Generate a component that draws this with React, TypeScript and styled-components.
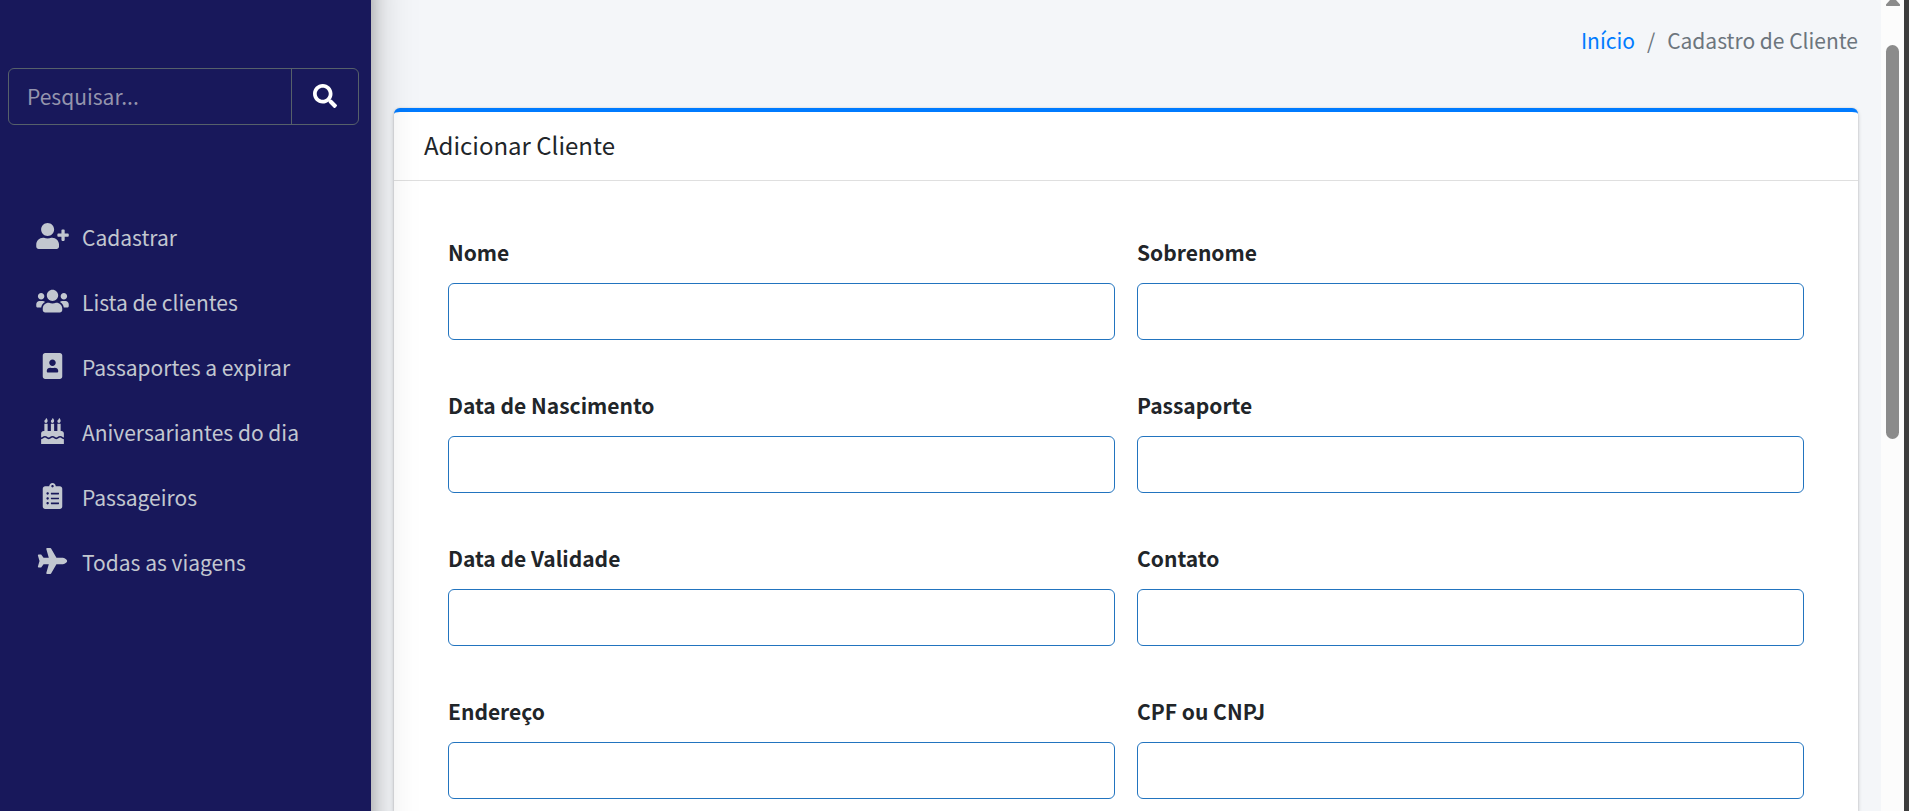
import React from "react";
import styled, { createGlobalStyle } from "styled-components";
import {
  FaBirthdayCake,
  FaClipboardList,
  FaPlane,
  FaPortrait,
  FaSearch,
  FaUserPlus,
  FaUsers,
} from "react-icons/fa";
import type { IconType } from "react-icons";

const GlobalStyle = createGlobalStyle`
  *, *::before, *::after { box-sizing: border-box; }
  body {
    margin: 0;
    background: #f4f6f9;
    color: #212529;
    font-family: "Source Sans Pro", "Noto Sans CJK SC", "Noto Sans", sans-serif;
    font-size: 21px;
    line-height: 36px;
  }
  input, button { font: inherit; }
`;

const Shell = styled.div`
  display: flex;
  min-height: 100vh;
  overflow: hidden;
`;

const Sidebar = styled.aside`
  position: relative;
  z-index: 1;
  flex: 0 0 371px;
  padding: 68px 12px 0 8px;
  background: #18185b;

  &::before {
    content: "";
    position: absolute;
    z-index: -1;
    inset: -60px 0;
    background: #18185b;
    box-shadow: 0 21px 42px rgba(0, 0, 0, 0.25), 0 15px 15px rgba(0, 0, 0, 0.22);
  }
`;

const SearchForm = styled.form`
  display: flex;
  height: 57px;
  border: 1px solid #56606a;
  border-radius: 6px;
`;

const SearchInput = styled.input`
  flex: 1;
  min-width: 0;
  padding: 0 18px 2px;
  border: 0;
  outline: 0;
  background: transparent;
  color: #fff;

  &::placeholder {
    color: #9494ad;
    opacity: 1;
  }
`;

const SearchButton = styled.button`
  display: flex;
  align-items: center;
  justify-content: center;
  width: 67px;
  padding: 0 0 2px;
  border: 0;
  border-left: 1px solid #56606a;
  background: transparent;
  color: #fff;
  cursor: pointer;

  svg {
    width: 24px;
    height: 24px;
  }
`;

const Menu = styled.ul`
  display: flex;
  flex-direction: column;
  gap: 5px;
  margin: 82px 0 0;
  padding: 0;
  list-style: none;
`;

const MenuLink = styled.a`
  display: flex;
  align-items: center;
  gap: 10px;
  padding: 12px 24px;
  color: #c2c7d0;
  text-decoration: none;
`;

const MenuIcon = styled.span`
  display: flex;
  justify-content: center;
  width: 40px;
  padding-bottom: 2px;

  svg {
    flex: none;
    width: 33px;
    height: 26px;
  }
`;

const Main = styled.main`
  display: flex;
  flex: 1;
  flex-direction: column;
  min-width: 0;
  padding: 22px 23px 0;
`;

const Breadcrumb = styled.ol`
  display: flex;
  justify-content: flex-end;
  gap: 12px;
  margin: 0 0 50px;
  padding: 0;
  color: #6c757d;
  list-style: none;

  li + li::before {
    content: "/";
    padding-right: 12px;
  }

  a {
    color: #007bff;
    text-decoration: none;
  }
`;

const Card = styled.section`
  flex: 1;
  border-top: 4px solid #007bff;
  border-radius: 6px 6px 0 0;
  background: #fff;
  box-shadow: 0 0 2px rgba(0, 0, 0, 0.13), 0 2px 4px rgba(0, 0, 0, 0.2);
`;

const CardHeader = styled.header`
  padding: 15px 30px 17px;
  border-bottom: 1px solid #dfdfdf;
`;

const CardTitle = styled.h1`
  margin: 0;
  font-size: 24px;
  font-weight: 400;
  line-height: 36px;
`;

const FormGrid = styled.form`
  display: grid;
  grid-template-columns: 1fr 1fr;
  gap: 47px 22px;
  padding: 53px 54px 0;
`;

const Field = styled.div`
  display: flex;
  flex-direction: column;
  gap: 13px;
`;

const Label = styled.label`
  font-weight: 700;
`;

const TextInput = styled.input`
  width: 100%;
  height: 57px;
  padding: 0 18px;
  border: 1px solid #2274bf;
  border-radius: 6px;
  background: #fff;
  color: #495057;
`;

const ScrollTrack = styled.div`
  display: flex;
  flex: 0 0 28px;
  flex-direction: column;
  align-items: center;
  gap: 39px;
  border-right: 5px solid #3c3c3c;
  background: #fcfcfc;

  svg {
    display: block;
    fill: #8b8b8b;
  }
`;

const ScrollThumb = styled.div`
  width: 13px;
  height: 394px;
  border-radius: 7px;
  background: #8b8b8b;
`;

const menu: { label: string; icon: IconType }[] = [
  { label: "Cadastrar", icon: FaUserPlus },
  { label: "Lista de clientes", icon: FaUsers },
  { label: "Passaportes a expirar", icon: FaPortrait },
  { label: "Aniversariantes do dia", icon: FaBirthdayCake },
  { label: "Passageiros", icon: FaClipboardList },
  { label: "Todas as viagens", icon: FaPlane },
];

const fields = [
  { id: "nome", label: "Nome" },
  { id: "sobrenome", label: "Sobrenome" },
  { id: "nascimento", label: "Data de Nascimento" },
  { id: "passaporte", label: "Passaporte" },
  { id: "validade", label: "Data de Validade" },
  { id: "contato", label: "Contato" },
  { id: "endereco", label: "Endereço" },
  { id: "documento", label: "CPF ou CNPJ" },
];

export default function App() {
  return (
    <Shell>
      <GlobalStyle />
      <Sidebar>
        <SearchForm role="search" onSubmit={(e) => e.preventDefault()}>
          <SearchInput type="text" placeholder="Pesquisar..." aria-label="Pesquisar" />
          <SearchButton type="submit" aria-label="Buscar">
            <FaSearch />
          </SearchButton>
        </SearchForm>
        <nav>
          <Menu>
            {menu.map(({ label, icon: Icon }) => (
              <li key={label}>
                <MenuLink href="#">
                  <MenuIcon>
                    <Icon />
                  </MenuIcon>
                  {label}
                </MenuLink>
              </li>
            ))}
          </Menu>
        </nav>
      </Sidebar>
      <Main>
        <Breadcrumb>
          <li>
            <a href="#">Início</a>
          </li>
          <li>Cadastro de Cliente</li>
        </Breadcrumb>
        <Card>
          <CardHeader>
            <CardTitle>Adicionar Cliente</CardTitle>
          </CardHeader>
          <FormGrid>
            {fields.map(({ id, label }) => (
              <Field key={id}>
                <Label htmlFor={id}>{label}</Label>
                <TextInput id={id} name={id} type="text" />
              </Field>
            ))}
          </FormGrid>
        </Card>
      </Main>
      <ScrollTrack aria-hidden="true">
        <svg width="14" height="6" viewBox="0 0 14 6">
          <path d="M4 0h6l4 4.500q.3 1.500-1 1.500H1Q-.3 6 0 4.500z" />
        </svg>
        <ScrollThumb />
      </ScrollTrack>
    </Shell>
  );
}
